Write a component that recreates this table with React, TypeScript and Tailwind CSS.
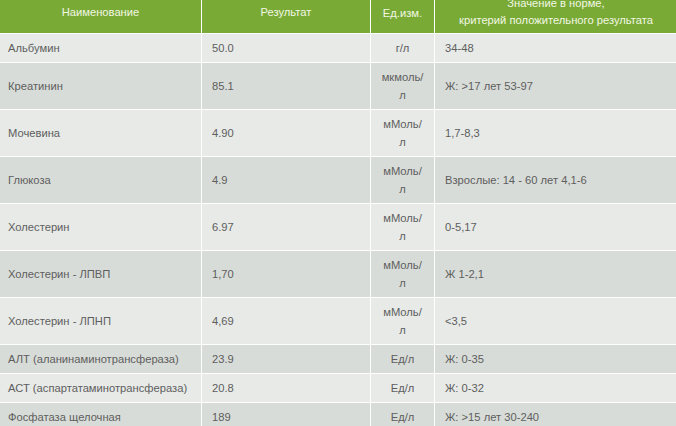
import React from "react";

type Row = { name: string; result: string; unit: [string, string?]; norm: string };

const rows: Row[] = [
  { name: "Альбумин", result: "50.0", unit: ["г/л"], norm: "34-48" },
  { name: "Креатинин", result: "85.1", unit: ["мкмоль/", "л"], norm: "Ж: >17 лет 53-97" },
  { name: "Мочевина", result: "4.90", unit: ["мМоль/", "л"], norm: "1,7-8,3" },
  { name: "Глюкоза", result: "4.9", unit: ["мМоль/", "л"], norm: "Взрослые: 14 - 60 лет 4,1-6" },
  { name: "Холестерин", result: "6.97", unit: ["мМоль/", "л"], norm: "0-5,17" },
  { name: "Холестерин - ЛПВП", result: "1,70", unit: ["мМоль/", "л"], norm: "Ж 1-2,1" },
  { name: "Холестерин - ЛПНП", result: "4,69", unit: ["мМоль/", "л"], norm: "<3,5" },
  { name: "АЛТ (аланинаминотрансфераза)", result: "23.9", unit: ["Ед/л"], norm: "Ж: 0-35" },
  { name: "АСТ (аспартатаминотрансфераза)", result: "20.8", unit: ["Ед/л"], norm: "Ж: 0-32" },
  { name: "Фосфатаза щелочная", result: "189", unit: ["Ед/л"], norm: "Ж: >15 лет 30-240" },
];

export default function App() {
  return (
    <div
      className="w-[676px] h-[426px] overflow-hidden bg-white"
      style={{ fontFamily: '"Liberation Sans", Arial, sans-serif' }}
    >
      <div className="-mt-[9px] grid grid-cols-[201px_168px_63px_260px] gap-px bg-white text-[11.2px] leading-[18px]">
        {/* header */}
        <div className="h-[42px] bg-[#79aa36] text-[#f2f7e4] flex items-center justify-center">Наименование</div>
        <div className="h-[42px] bg-[#79aa36] text-[#f2f7e4] flex items-center justify-center">Результат</div>
        <div className="h-[42px] bg-[#79aa36] text-[#f2f7e4] flex items-center justify-center pt-[2px]">Ед.изм.</div>
        <div className="h-[42px] bg-[#79aa36] text-[#f2f7e4] flex flex-col items-center justify-center leading-[17px] pr-[18px]">
          <span>Значение в норме,</span>
          <span>критерий положительного результата</span>
        </div>
        {rows.map((r, i) => {
          const bg = i % 2 === 0 ? "bg-[#e7eae7]" : "bg-[#d8dcd8]";
          return (
            <React.Fragment key={i}>
              <div className={`${bg} text-[#5e5e5e] py-[5px] pl-[8px] flex items-center`}>{r.name}</div>
              <div className={`${bg} text-[#5e5e5e] py-[5px] pl-[10px] flex items-center`}>{r.result}</div>
              <div className={`${bg} text-[#5e5e5e] py-[5px] flex flex-col items-center justify-center`}>
                <span>{r.unit[0]}</span>
                {r.unit[1] && <span>{r.unit[1]}</span>}
              </div>
              <div className={`${bg} text-[#5e5e5e] py-[5px] pl-[10px] flex items-center`}>{r.norm}</div>
            </React.Fragment>
          );
        })}
      </div>
    </div>
  );
}
